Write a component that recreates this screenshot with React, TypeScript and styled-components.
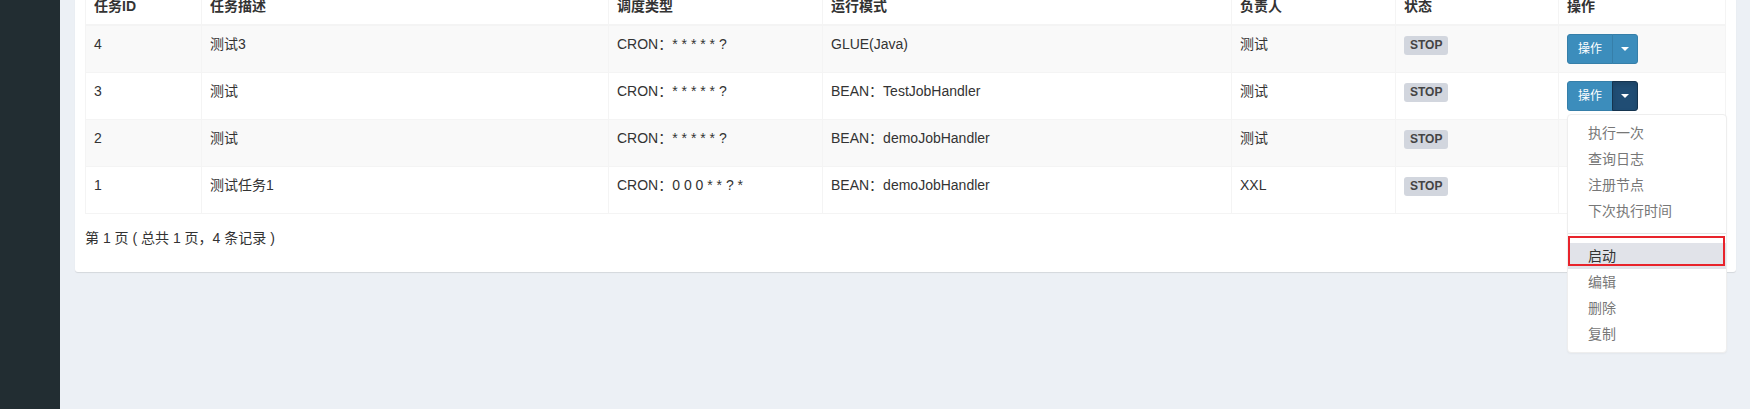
import React from "react";
import styled, { createGlobalStyle, css } from "styled-components";

const GlobalStyle = createGlobalStyle`
  html, body { margin: 0; padding: 0; }
  body {
    background: #ecf0f5;
    font-family: "Liberation Sans", Arial, "Noto Sans CJK SC", sans-serif;
    font-size: 14px;
    line-height: 20px;
    color: #333;
  }
`;

const Page = styled.div`
  display: flex;
  height: 409px;
  overflow: hidden;
`;

const Sidebar = styled.aside`
  flex: 0 0 60px;
  background: #222d32;
`;

const Content = styled.main`
  flex: 1;
  padding: 0 15px;
  margin-top: -23px;
`;

const Box = styled.section`
  background: #fff;
  border-radius: 3px;
  box-shadow: 0 1px 1px rgba(0, 0, 0, 0.1);
  padding: 10px 10px 14px;
`;

const Table = styled.table`
  width: 100%;
  border-collapse: collapse;
  table-layout: fixed;
  border: 1px solid #f4f4f4;
`;

const Th = styled.th`
  text-align: left;
  font-weight: bold;
  padding: 8px;
  border: 1px solid #f4f4f4;
  border-bottom: 2px solid #f4f4f4;
  color: #333;
`;

const Tr = styled.tr<{ $striped: boolean }>`
  background: ${(p) => (p.$striped ? "#f9f9f9" : "#fff")};
`;

const Td = styled.td`
  padding: 8px;
  vertical-align: top;
  border: 1px solid #f4f4f4;
  color: #333;
`;

const StatusLabel = styled.span`
  display: inline-block;
  margin-top: 2px;
  padding: 2px 6px 3px;
  font-size: 12px;
  line-height: 14px;
  font-weight: bold;
  color: #444;
  background: #d2d6de;
  border-radius: 3px;
`;

const BtnGroup = styled.div`
  position: relative;
  display: inline-flex;
  vertical-align: top;
`;

const btnBase = css`
  font-family: inherit;
  font-size: 12px;
  line-height: 18px;
  height: 30px;
  color: #fff;
  background: #3c8dbc;
  border: 1px solid #367fa9;
  cursor: pointer;
`;

const MainBtn = styled.button`
  ${btnBase};
  padding: 5px 10px;
  border-radius: 3px 0 0 3px;
`;

const CaretBtn = styled.button<{ $open: boolean }>`
  ${btnBase};
  margin-left: -1px;
  width: 26px;
  padding: 0;
  border-radius: 0 3px 3px 0;
  display: flex;
  align-items: center;
  justify-content: center;
  ${(p) =>
    p.$open &&
    css`
      background: #204d74;
      border-color: #15344f;
      box-shadow: inset 0 3px 5px rgba(0, 0, 0, 0.125);
    `}
`;

const Caret = styled.span`
  width: 0;
  height: 0;
  border-top: 4px solid #fff;
  border-left: 4px solid transparent;
  border-right: 4px solid transparent;
`;

const Menu = styled.ul`
  position: absolute;
  top: 100%;
  left: 0;
  z-index: 10;
  min-width: 158px;
  margin: 3px 0 0;
  padding: 5px 0;
  list-style: none;
  background: #fff;
  border: 1px solid #eee;
  border-radius: 4px;
  box-shadow: 0 1px 2px rgba(0, 0, 0, 0.04);
`;

const MenuItem = styled.li<{ $active?: boolean }>`
  position: relative;
  padding: 3px 20px;
  line-height: 20px;
  white-space: nowrap;
  color: ${(p) => (p.$active ? "#333" : "#777")};
  background: ${(p) => (p.$active ? "#e1e3e9" : "transparent")};
`;

const Divider = styled.li`
  height: 1px;
  margin: 9px 0;
  background: #e5e5e5;
`;

const Highlight = styled.span`
  position: absolute;
  left: 0;
  right: 1px;
  top: -7px;
  height: 30px;
  box-sizing: border-box;
  border: 2px solid #e8232b;
  pointer-events: none;
`;

const Info = styled.div`
  padding-top: 14px;
  padding-bottom: 10px;
  color: #333;
`;

type Job = {
  id: number;
  desc: string;
  cron: string;
  mode: string;
  owner: string;
};

const jobs: Job[] = [
  { id: 4, desc: "测试3", cron: "CRON：* * * * * ?", mode: "GLUE(Java)", owner: "测试" },
  { id: 3, desc: "测试", cron: "CRON：* * * * * ?", mode: "BEAN：TestJobHandler", owner: "测试" },
  { id: 2, desc: "测试", cron: "CRON：* * * * * ?", mode: "BEAN：demoJobHandler", owner: "测试" },
  { id: 1, desc: "测试任务1", cron: "CRON：0 0 0 * * ? *", mode: "BEAN：demoJobHandler", owner: "XXL" },
];

const colWidths = [116, 407, 214, 409, 164, 163, 167];
const headers = ["任务ID", "任务描述", "调度类型", "运行模式", "负责人", "状态", "操作"];

const menuTop = ["执行一次", "查询日志", "注册节点", "下次执行时间"];
const menuBottom = ["编辑", "删除", "复制"];

function OpsButton({ open }: { open: boolean }) {
  return (
    <BtnGroup>
      <MainBtn>操作</MainBtn>
      <CaretBtn $open={open}>
        <Caret />
      </CaretBtn>
      {open && (
        <Menu>
          {menuTop.map((m) => (
            <MenuItem key={m}>{m}</MenuItem>
          ))}
          <Divider />
          <MenuItem $active>
            启动
            <Highlight />
          </MenuItem>
          {menuBottom.map((m) => (
            <MenuItem key={m}>{m}</MenuItem>
          ))}
        </Menu>
      )}
    </BtnGroup>
  );
}

export default function App() {
  return (
    <>
      <GlobalStyle />
      <Page>
        <Sidebar />
        <Content>
          <Box>
            <Table>
              <colgroup>
                {colWidths.map((w, i) => (
                  <col key={i} style={{ width: w }} />
                ))}
              </colgroup>
              <thead>
                <tr>
                  {headers.map((h) => (
                    <Th key={h}>{h}</Th>
                  ))}
                </tr>
              </thead>
              <tbody>
                {jobs.map((j, i) => (
                  <Tr key={j.id} $striped={i % 2 === 0}>
                    <Td>{j.id}</Td>
                    <Td>{j.desc}</Td>
                    <Td>{j.cron}</Td>
                    <Td>{j.mode}</Td>
                    <Td>{j.owner}</Td>
                    <Td>
                      <StatusLabel>STOP</StatusLabel>
                    </Td>
                    <Td>
                      <OpsButton open={i === 1} />
                    </Td>
                  </Tr>
                ))}
              </tbody>
            </Table>
            <Info>第 1 页 ( 总共 1 页，4 条记录 )</Info>
          </Box>
        </Content>
      </Page>
    </>
  );
}
